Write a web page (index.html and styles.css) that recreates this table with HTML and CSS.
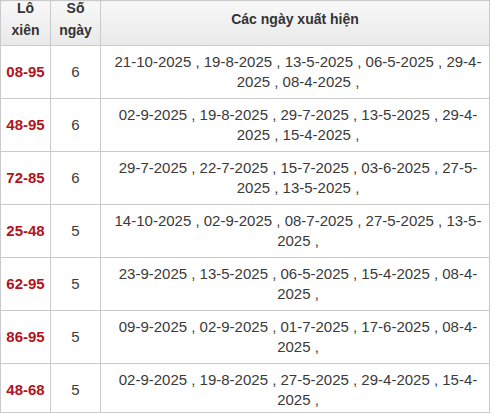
FILE: index.html
```html
<!DOCTYPE html>
<html>
<head>
<meta charset="utf-8">
<link rel="stylesheet" href="styles.css">
</head>
<body>
<div class="wrap">
<table class="lx">
  <colgroup><col class="c1"><col class="c2"><col class="c3"></colgroup>
  <thead>
    <tr><th><div class="two">Lô xiên</div></th><th><div class="two">Số ngày</div></th><th class="one">Các ngày xuất hiện</th></tr>
  </thead>
  <tbody>
    <tr><td class="pair">08-95</td><td>6</td><td class="dates">21-10-2025 , 19-8-2025 , 13-5-2025 , 06-5-2025 , 29-4-2025 , 08-4-2025 ,</td></tr>
    <tr><td class="pair">48-95</td><td>6</td><td class="dates">02-9-2025 , 19-8-2025 , 29-7-2025 , 13-5-2025 , 29-4-2025 , 15-4-2025 ,</td></tr>
    <tr><td class="pair">72-85</td><td>6</td><td class="dates">29-7-2025 , 22-7-2025 , 15-7-2025 , 03-6-2025 , 27-5-2025 , 13-5-2025 ,</td></tr>
    <tr><td class="pair">25-48</td><td>5</td><td class="dates">14-10-2025 , 02-9-2025 , 08-7-2025 , 27-5-2025 , 13-5-2025 ,</td></tr>
    <tr><td class="pair">62-95</td><td>5</td><td class="dates">23-9-2025 , 13-5-2025 , 06-5-2025 , 15-4-2025 , 08-4-2025 ,</td></tr>
    <tr><td class="pair">86-95</td><td>5</td><td class="dates">09-9-2025 , 02-9-2025 , 01-7-2025 , 17-6-2025 , 08-4-2025 ,</td></tr>
    <tr><td class="pair">48-68</td><td>5</td><td class="dates">02-9-2025 , 19-8-2025 , 27-5-2025 , 29-4-2025 , 15-4-2025 ,</td></tr>
  </tbody>
</table>
</div>
</body>
</html>
```
FILE: styles.css
```css
html, body { margin: 0; padding: 0; background: #fff; }
body { font-family: "Liberation Sans", Arial, sans-serif; color: #333; }
.wrap { width: 490px; height: 413px; overflow: hidden; border-bottom: 1px solid #cacaca; box-sizing: border-box; }
.lx { border-collapse: collapse; table-layout: fixed; width: 490px; }
.c1 { width: 50px; }
.c2 { width: 50px; }
.lx th, .lx td { border: 1px solid #cacaca; text-align: center; }
.lx th {
  font-size: 14px; font-weight: bold; color: #333; line-height: 22px;
  padding: 0 2px; height: 44px; vertical-align: top;
  background: linear-gradient(#f8f8f8, #e9e9e9);
}
.lx th .two { margin-top: -4px; }
.lx th.one { padding-top: 7px; height: 37px; }
.lx td { font-size: 15px; line-height: 20px; padding: 6px 4px; color: #3a3a3a; }
.lx td.dates { padding: 6px 5px 6px 11px; }
.lx td.pair { color: #b3131b; font-weight: bold; padding-left: 2px; padding-right: 2px; }
```
